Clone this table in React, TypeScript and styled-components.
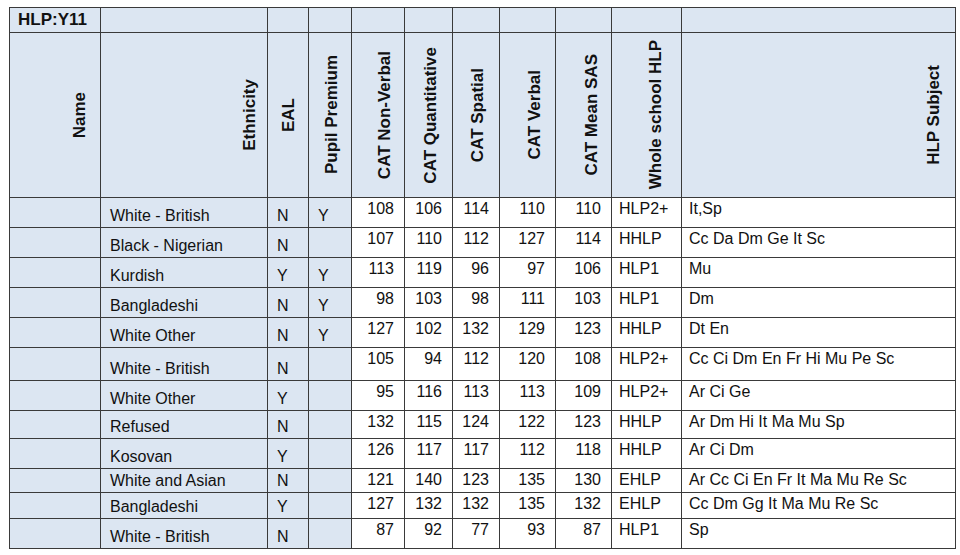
import React from "react";
import styled, { createGlobalStyle } from "styled-components";

const Global = createGlobalStyle`
  html, body { margin: 0; padding: 0; background: #ffffff; }
  body { font-family: "Liberation Sans", Arial, sans-serif; color: #111; }
`;

const BLUE = "#dce6f2";
const LINE = "#3a3a3a";

const Page = styled.div`
  padding: 7px 0 0 9px;
`;

const Table = styled.table`
  border-collapse: collapse;
  table-layout: fixed;
  width: 947px;
  font-family: "Liberation Sans", Arial, sans-serif;
`;

const TitleCell = styled.td`
  background: ${BLUE};
  border: 1px solid ${LINE};
  height: 24px;
  padding: 0 0 0 8px;
  font-weight: bold;
  font-size: 17px;
  line-height: 18px;
  vertical-align: middle;
  white-space: nowrap;
`;

const HeadCell = styled.th<{ $pr: number }>`
  background: ${BLUE};
  border: 1px solid ${LINE};
  height: 164px;
  padding: 0 ${(p) => p.$pr}px 0 0;
  vertical-align: middle;
  text-align: right;
`;

const HeadInner = styled.div`
  display: flex;
  justify-content: flex-end;
  align-items: center;
  height: 164px;
`;

const Rotated = styled.span`
  writing-mode: vertical-rl;
  transform: rotate(180deg);
  white-space: nowrap;
  font-weight: bold;
  font-size: 17px;
  line-height: 18px;
`;

const Row = styled.tr<{ $h: number }>`
  height: ${(p) => p.$h}px;
`;

const InfoCell = styled.td`
  background: ${BLUE};
  border: 1px solid ${LINE};
  vertical-align: bottom;
  padding: 0 4px 2px 9px;
  font-size: 16px;
  line-height: 18px;
  white-space: nowrap;
`;

const NumCell = styled.td`
  background: #ffffff;
  border: 1px solid ${LINE};
  vertical-align: top;
  text-align: right;
  padding: 2px 10px 0 0;
  font-size: 16px;
  line-height: 18px;
`;

const TextCell = styled.td`
  background: #ffffff;
  border: 1px solid ${LINE};
  vertical-align: top;
  text-align: left;
  padding: 2px 4px 0 7px;
  font-size: 16px;
  line-height: 18px;
  white-space: nowrap;
`;

const widths = [91, 167, 41, 43, 53, 48, 47, 56, 56, 70, 274];

const headers: { label: string; pr: number }[] = [
  { label: "Name", pr: 11 },
  { label: "Ethnicity", pr: 8 },
  { label: "EAL", pr: 10 },
  { label: "Pupil Premium", pr: 10 },
  { label: "CAT Non-Verbal", pr: 10 },
  { label: "CAT Quantitative", pr: 12 },
  { label: "CAT Spatial", pr: 12 },
  { label: "CAT Verbal", pr: 11 },
  { label: "CAT Mean SAS", pr: 10 },
  { label: "Whole school HLP", pr: 16 },
  { label: "HLP Subject", pr: 12 },
];

type Student = {
  eth: string;
  eal: string;
  pp: string;
  scores: number[];
  hlp: string;
  subj: string;
  h: number;
};

const students: Student[] = [
  { eth: "White - British", eal: "N", pp: "Y", scores: [108, 106, 114, 110, 110], hlp: "HLP2+", subj: "It,Sp", h: 30 },
  { eth: "Black - Nigerian", eal: "N", pp: "", scores: [107, 110, 112, 127, 114], hlp: "HHLP", subj: "Cc Da Dm Ge It Sc", h: 30 },
  { eth: "Kurdish", eal: "Y", pp: "Y", scores: [113, 119, 96, 97, 106], hlp: "HLP1", subj: "Mu", h: 30 },
  { eth: "Bangladeshi", eal: "N", pp: "Y", scores: [98, 103, 98, 111, 103], hlp: "HLP1", subj: "Dm", h: 30 },
  { eth: "White Other", eal: "N", pp: "Y", scores: [127, 102, 132, 129, 123], hlp: "HHLP", subj: "Dt En", h: 30 },
  { eth: "White - British", eal: "N", pp: "", scores: [105, 94, 112, 120, 108], hlp: "HLP2+", subj: "Cc Ci Dm En Fr Hi Mu Pe Sc", h: 33 },
  { eth: "White Other", eal: "Y", pp: "", scores: [95, 116, 113, 113, 109], hlp: "HLP2+", subj: "Ar Ci Ge", h: 30 },
  { eth: "Refused", eal: "N", pp: "", scores: [132, 115, 124, 122, 123], hlp: "HHLP", subj: "Ar Dm Hi It Ma Mu Sp", h: 28 },
  { eth: "Kosovan", eal: "Y", pp: "", scores: [126, 117, 117, 112, 118], hlp: "HHLP", subj: "Ar Ci Dm", h: 30 },
  { eth: "White and Asian", eal: "N", pp: "", scores: [121, 140, 123, 135, 130], hlp: "EHLP", subj: "Ar Cc Ci En Fr It Ma Mu Re Sc", h: 24 },
  { eth: "Bangladeshi", eal: "Y", pp: "", scores: [127, 132, 132, 135, 132], hlp: "EHLP", subj: "Cc Dm Gg It Ma Mu Re Sc", h: 26 },
  { eth: "White - British", eal: "N", pp: "", scores: [87, 92, 77, 93, 87], hlp: "HLP1", subj: "Sp", h: 30 },
];

export default function App() {
  return (
    <Page>
      <Global />
      <Table>
        <colgroup>
          {widths.map((w, i) => (
            <col key={i} style={{ width: w }} />
          ))}
        </colgroup>
        <thead>
          <tr>
            <TitleCell>HLP:Y11</TitleCell>
            {widths.slice(1).map((_, i) => (
              <TitleCell key={i} />
            ))}
          </tr>
          <tr>
            {headers.map((h) => (
              <HeadCell key={h.label} $pr={h.pr}>
                <HeadInner>
                  <Rotated>{h.label}</Rotated>
                </HeadInner>
              </HeadCell>
            ))}
          </tr>
        </thead>
        <tbody>
          {students.map((s, i) => (
            <Row key={i} $h={s.h}>
              <InfoCell />
              <InfoCell>{s.eth}</InfoCell>
              <InfoCell>{s.eal}</InfoCell>
              <InfoCell>{s.pp}</InfoCell>
              {s.scores.map((n, j) => (
                <NumCell key={j}>{n}</NumCell>
              ))}
              <TextCell>{s.hlp}</TextCell>
              <TextCell>{s.subj}</TextCell>
            </Row>
          ))}
        </tbody>
      </Table>
    </Page>
  );
}
